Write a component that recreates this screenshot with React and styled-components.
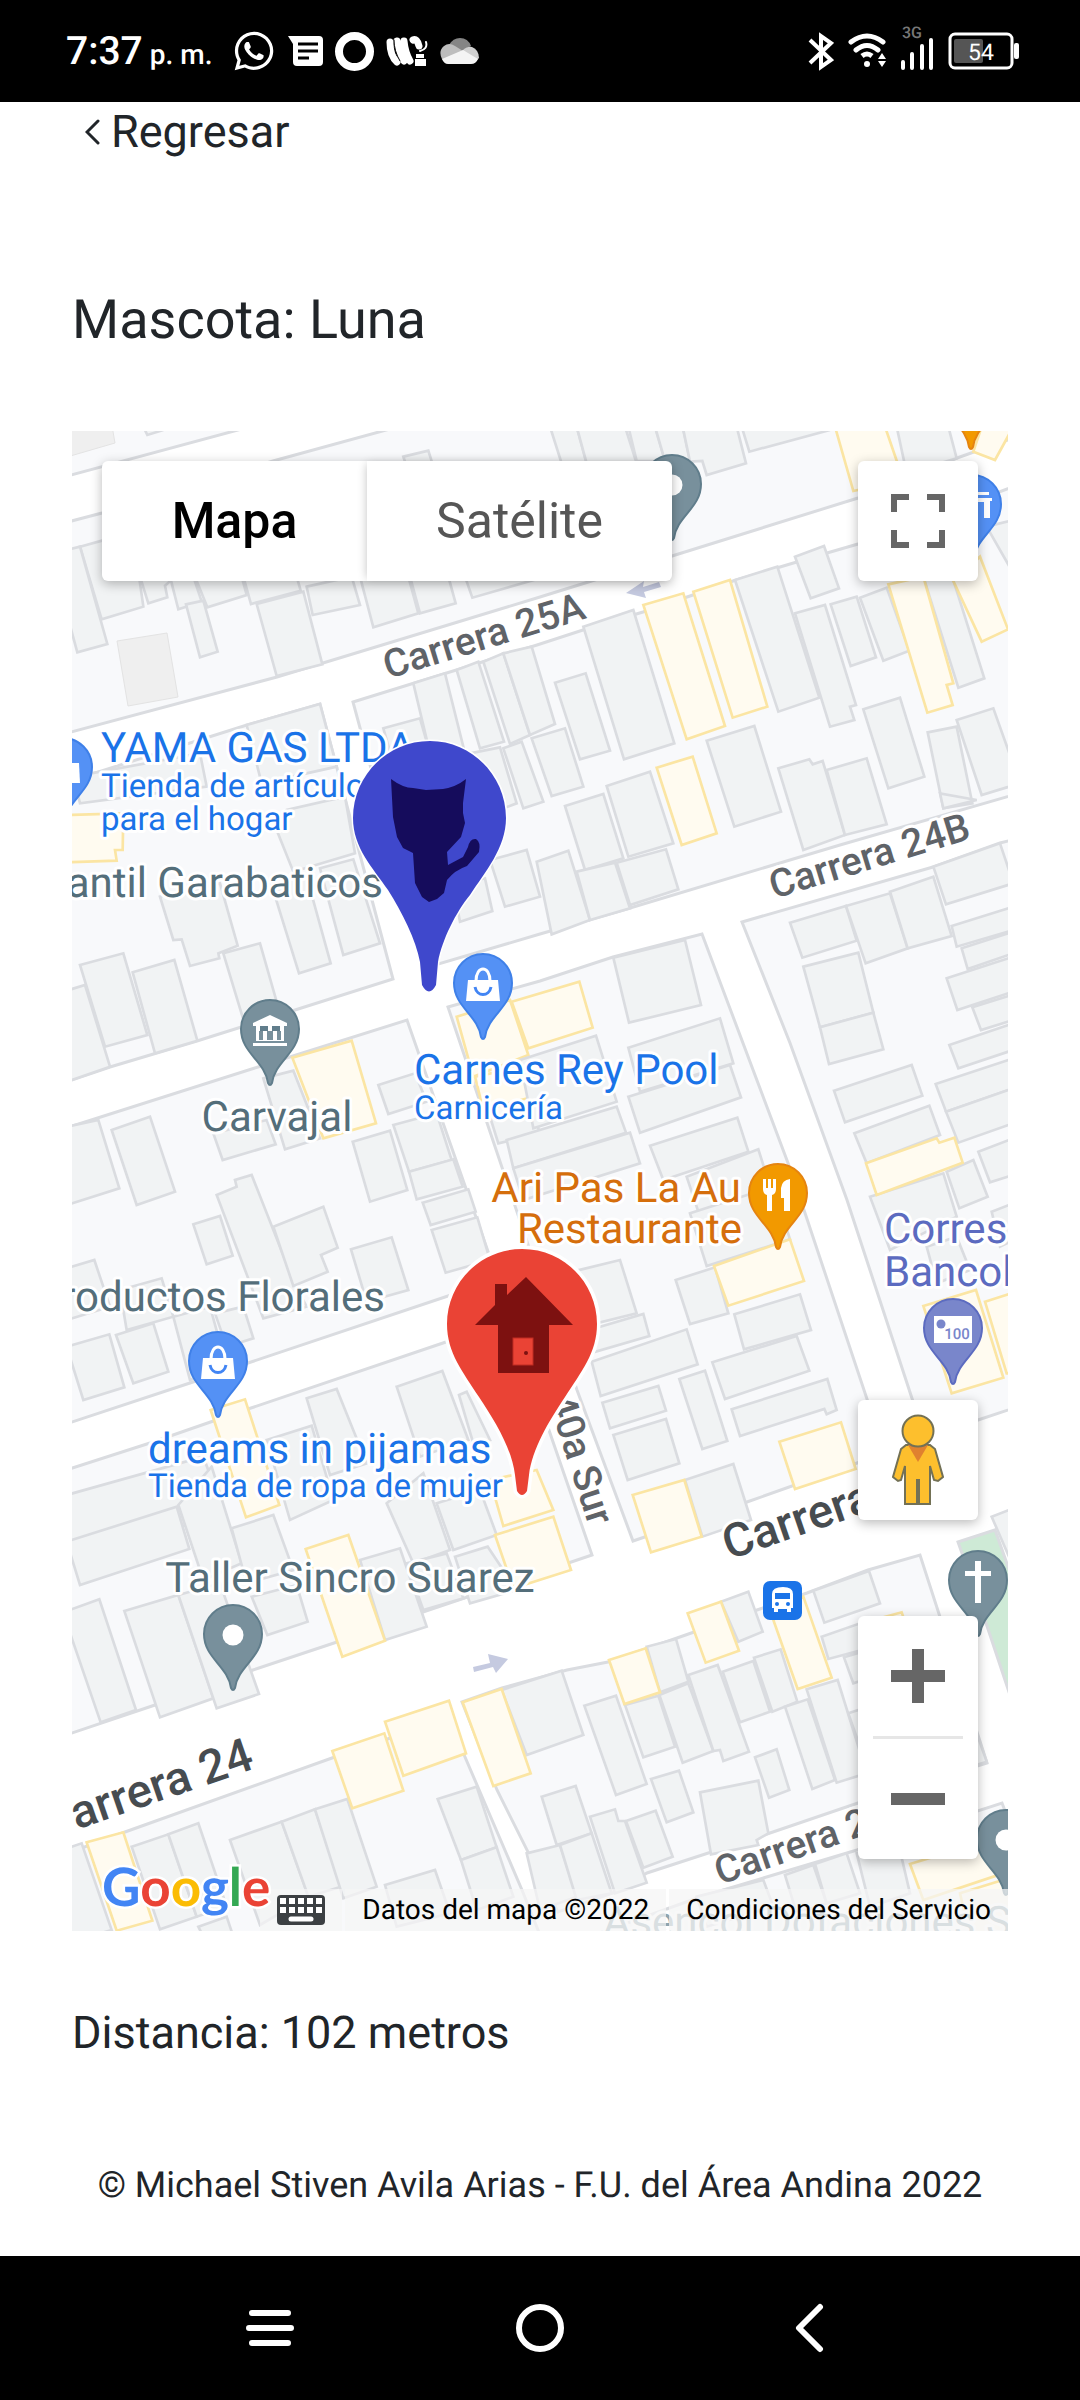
import React from "react";
import styled, { createGlobalStyle } from "styled-components";
import { FaWhatsapp } from "react-icons/fa";

const GlobalStyle = createGlobalStyle`
  * { box-sizing: border-box; }
  body {
    margin: 0;
    background: #fff;
    color: #212529;
    font-family: Roboto, "Liberation Sans", sans-serif;
    text-rendering: geometricPrecision;
  }
  button { border: 0; margin: 0; padding: 0; font: inherit; background: none; }
  svg { display: block; flex: none; }
`;

const Page = styled.div`
  display: flex;
  flex-direction: column;
  min-height: 100vh;
`;

const StatusBar = styled.header`
  display: flex;
  align-items: center;
  justify-content: space-between;
  height: 102px;
  padding: 0 60px 0 66px;
  background: #000;
  color: #fff;
`;

const StatusGroup = styled.div`
  display: flex;
  align-items: center;
  gap: ${(p) => p.$gap}px;
`;

const Clock = styled.time`
  font-size: 39px;
  font-weight: 500;
  line-height: 48px;
  padding-top: 4px;
  margin-right: 8px;
  small { font-size: 28px; margin-left: 7px; }
`;

const Main = styled.main`
  flex: 1;
  padding: 0 72px;
`;

const BackLink = styled.a`
  display: flex;
  align-items: center;
  gap: 11px;
  width: max-content;
  padding: 2px 0 0 13px;
  color: #212529;
  font-size: 45px;
  line-height: 56px;
  text-decoration: none;
`;

const Title = styled.h1`
  margin: 127px 0 76px;
  font-size: 54px;
  font-weight: 400;
  line-height: 68px;
`;

const MapFrame = styled.section`
  position: relative;
  height: 1500px;
  overflow: hidden;
  background: #fff;
`;

const MapDrawing = styled.svg`
  width: 100%;
  height: 100%;
`;

const Control = styled.div`
  position: absolute;
  display: flex;
  flex-direction: ${(p) => p.$direction || "row"};
  align-items: center;
  ${(p) => p.$place}
  border-radius: 6px;
  background: #fff;
  box-shadow: 0 3px 12px rgba(0, 0, 0, 0.28);
`;

const TypeButton = styled.button`
  height: 120px;
  width: ${(p) => p.$width}px;
  font-size: 50px;
  font-weight: ${(p) => (p.$active ? 500 : 400)};
  color: ${(p) => (p.$active ? "#000" : "#565656")};
  box-shadow: ${(p) => (p.$active ? "none" : "-3px 0 9px -3px rgba(0,0,0,.24)")};
`;

const IconButton = styled.button`
  display: grid;
  place-items: center;
  width: 120px;
  height: 120px;
`;

const Divider = styled.hr`
  width: 90px;
  height: 3px;
  margin: 0;
  border: 0;
  background: #e6e6e6;
`;

const Wordmark = styled.a`
  position: absolute;
  left: 30px;
  bottom: 10px;
  font-family: Lato, sans-serif;
  font-size: 53px;
  line-height: 68px;
  font-weight: 700;
  text-decoration: none;
  -webkit-text-stroke: 5px #fff;
  paint-order: stroke fill;
`;

const Letter = styled.span`
  color: ${(p) => p.$color};
`;

const Attribution = styled.footer`
  position: absolute;
  right: 0;
  bottom: 0;
  display: flex;
  gap: 3px;
  height: 42px;
`;

const Credit = styled.span`
  display: flex;
  align-items: center;
  padding: 0 17px;
  background: rgba(245, 245, 245, 0.72);
  color: #000;
  font-size: 28px;
  line-height: 42px;
  white-space: nowrap;
  a, button { color: inherit; text-decoration: none; }
`;

const Distance = styled.p`
  margin: 68px 0 0;
  font-size: 45px;
  line-height: 68px;
`;

const Footer = styled.footer`
  padding: 92px 0 44px;
  font-size: 36px;
  line-height: 52px;
  text-align: center;
`;

const NavBar = styled.nav`
  display: grid;
  grid-template-columns: repeat(3, 1fr);
  height: 144px;
  padding: 0 12.5%;
  background: #000;
`;

const NavButton = styled.button`
  display: grid;
  place-items: center;
`;

/* City blocks, in map pixels */
const BLOCKS = [
  "60,420 275,420 60,478",
  "60,524 102,513 273,461 430,418 1020,418 1008,440 957,458 858,498 672,556 540,597 277,677 60,735",
  "60,784 247,725 320,704 372,900 393,979 295,1010 197,1041 110,1067 60,1084",
  "353,702 537,645 583,630 643,612 690,596 733,581 780,567 827,553 858,544 978,500 1020,484 1020,793 840,845 630,908 540,934 425,968",
  "60,1130 258,1067 407,1020 498,1280 448,1296 248,1363 193,1382 60,1426",
  "448,1007 540,981 613,957 702,934 788,1163 805,1213 885,1453 857,1463 747,1502 633,1541 577,1390",
  "742,922 933,867 1000,843 1020,838 1020,1406 978,1420 925,1438 847,1200 790,1043",
  "60,1472 150,1443 248,1409 443,1343 511,1320 592,1555 423,1612 337,1642 253,1670 155,1705 60,1737",
  "60,1856 125,1832 332,1758 385,1740 448,1716 465,1757 522,1890 542,1940 60,1940",
  "462,1702 502,1688 567,1670 608,1662 677,1638 757,1610 807,1593 868,1570 920,1555 940,1617 987,1763 858,1803 770,1833 647,1873 613,1893 558,1912 497,1790",
  "580,1940 700,1897 857,1850 1002,1803 1020,1850 1020,1940",
];

/* Building footprints by tile; tiles are drawn at three units to the pixel */
const TILES = [
  {
    x: 60, y: 420,
    homes: [
      "250,20 262,45 310,30", "60,380 126,362 220,350 250,560 125,598", "20,390 60,380 142,672 52,697 20,580",
      "240,470 265,550 322,532 315,497 345,470", "330,470 355,568 425,545 400,470", "378,553 430,542 473,695 420,712",
      "405,470 442,562 560,525 545,470", "550,470 573,552 722,512 710,470", "590,552 730,515 787,733 650,768",
      "740,500 875,470 900,555 758,585", "900,470 940,622 1075,580 1045,470", "1050,470 1080,580 1187,550 1165,470",
      "1215,470 1237,533 1440,475 1440,440", "1030,110 1105,92 1120,140 1040,140", "560,915 780,852 830,1040 605,1090",
      "970,925 1080,895 1110,1000 1000,1030", "1060,790 1155,760 1215,1000 1110,1000",
      "1190,750 1255,725 1332,965 1260,985", "1270,725 1330,700 1410,945 1350,972", "1330,700 1415,680 1485,912 1410,945",
      "1330,985 1385,965 1450,1145 1390,1165", "1230,1000 1320,982 1370,1150 1290,1180", "40,1070 420,1000 440,1100 60,1150",
    ],
    shops: [],
  },
  {
    x: 540, y: 420,
    homes: [
      "30,20 110,20 140,130 65,130", "110,20 255,20 290,130 140,130", "265,20 345,20 375,123 290,123",
      "345,20 428,20 450,123 375,123", "428,20 590,20 618,130 500,165 487,123 450,125", "605,20 870,30 628,95",
      "1070,20 1225,20 1250,115 1100,160", "130,620 280,570 403,970 252,1018", "585,480 712,440 838,833 715,875",
      "765,410 852,378 897,505 812,535", "765,580 855,555 948,855 930,860 943,900 870,920", "872,553 950,530 1008,712 932,738",
      "960,533 1040,503 1108,692 1030,722", "1150,470 1240,480 1333,775 1255,803", "970,868 1080,833 1153,1070 1045,1105",
      "1163,937 1250,920 1297,1150 1210,1165", "1250,900 1360,865 1440,1090 1325,1125", "45,788 137,760 210,992 120,1018",
      "-25,955 75,925 130,1100 35,1128", "200,1098 330,1055 400,1270 265,1310",
      "75,1158 190,1122 250,1315 135,1350", "500,962 643,918 723,1175 583,1220",
      "715,1045 808,1018 818,1033 848,1023 915,1245 790,1290", "860,1050 980,1015 1040,1213 915,1245",
      "1340,320 1420,300 1420,460",
    ],
    shops: [
      "885,20 1035,20 1090,180 940,213", "1420,20 1365,120 1300,95 1325,20", "310,555 430,520 555,918 440,958",
      "460,515 570,480 682,860 578,893", "1045,493 1150,470 1240,790 1220,795 1238,855 1162,878 1108,700",
      "1240,483 1320,410 1404,628 1325,665", "350,1043 458,1010 530,1240 425,1275",
    ],
  },
  {
    x: 60, y: 800,
    homes: [
      "650,90 680,30 855,-10 885,160 700,215", "780,205 880,178 960,430 850,465", "300,290 480,250 533,437 475,460 478,475 390,498 365,418 340,420",
      "60,495 190,460 262,705 135,740", "20,572 75,555 150,800 20,845", "218,517 343,480 412,722 285,760",
      "490,460 600,430 660,640 555,675", "630,240 740,230 812,490 717,520", "155,990 270,950 345,1175 230,1215",
      "20,980 115,960 178,1165 20,1215", "610,835 700,812 780,1015 675,1048", "460,1000 620,960 647,1033 488,1080",
      "955,855 1065,820 1100,905 985,942", "1000,975 1130,940 1175,1080 1047,1115", "1047,1115 1180,1078 1208,1160 1070,1198",
      "878,1025 990,992 1042,1170 930,1205", "1290,950 1420,940 1440,1000 1315,1030", "1290,180 1400,150 1440,290 1335,320",
      "1180,260 1275,235 1297,333 1200,365", "1385,1103 1470,1080 1500,1160 1410,1180",
    ],
    shops: ["20,45 190,40 188,150 165,150 170,182 20,187", "1190,650 1350,600 1405,765 1240,830", "697,773 875,722 948,970 790,1015", "1245,830 1390,800 1420,890 1270,930"],
  },
  {
    x: 540, y: 800,
    homes: [
      "-10,185 85,152 150,360 35,403", "110,215 225,188 270,325 150,360", "230,188 378,148 415,268 270,315", "1200,-20 1210,25 1310,0",
      "220,473 435,420 483,615 267,668", "265,743 540,655 580,790 300,875", "265,890 570,795 603,892 300,998",
      "330,1037 592,953 625,1055 370,1140", "440,1130 655,1048 700,1190 480,1250", "-60,780 168,707 230,905 -20,985",
      "-100,1020 230,920 258,998 -80,1105", "-80,1105 270,998 300,1090 -50,1200", "750,368 918,318 950,422 787,473",
      "918,318 1050,280 1103,445 977,490", "1050,275 1180,230 1235,408 1103,445", "1180,200 1380,130 1420,250 1218,313",
      "1235,378 1420,320 1420,390 1250,440", "1265,445 1420,395 1420,460 1283,507", "1220,535 1420,470 1420,575 1252,630",
      "1297,622 1420,583 1420,660 1323,690", "1228,735 1420,670 1420,750 1255,805", "1187,852 1420,775 1420,865 1218,935",
      "1218,935 1420,865 1420,970 1255,1028", "790,500 955,458 1000,638 840,682", "840,682 1000,638 1030,748 867,792",
      "882,872 1115,795 1147,887 915,967", "943,1000 1168,917 1200,1005 980,1090", "1315,1055 1420,1015 1420,1125 1350,1147",
      "1220,1115 1300,1080 1343,1190 1258,1225", "990,1190 1210,1120 1250,1250 1050,1350",
    ],
    shops: ["-85,605 118,545 158,683 -35,745", "978,1090 1190,1015 1198,1028 1243,1013 1268,1088 1010,1185"],
  },
  {
    x: 60, y: 1180,
    homes: [
      "470,45 530,20 525,0 575,-15 705,315 740,380 610,415", "400,133 480,108 518,227 440,253", "640,140 790,80 833,203 783,225 803,275 700,318",
      "873,208 995,172 1045,330 920,365", "1115,150 1252,112 1290,240 1157,278", "1088,68 1225,28 1247,95 1112,135",
      "20,265 103,240 150,380 20,420", "180,330 305,295 340,410 200,450", "20,500 148,463 193,622 70,660 20,500", "168,465 280,430 325,575 220,610",
      "340,410 450,380 500,560 390,600", "465,400 550,380 580,475 500,500", "1010,620 1147,573 1225,780 1080,830",
      "1197,645 1220,635 1290,780 1240,790", "740,655 830,627 920,850 810,885", "620,780 755,737 820,960 690,1020",
      "20,945 430,830 500,1020 20,1085", "20,1085 350,980 388,1107 60,1215", "355,975 455,860 545,1150 430,1200",
      "515,1045 640,1005 700,1170 560,1210", "900,1140 1020,1105 1100,1340 975,1380", "980,970 1090,880 1170,1110 1060,1150",
      "1130,970 1260,930 1310,1065 1180,1110", "1185,1130 1283,1100 1370,1230 1230,1270", "1040,1150 1160,1120 1210,1255 1090,1290",
    ],
    shops: [
      "452,690 555,658 658,975 558,1012", "737,1107 865,1065 975,1382 847,1430", "1290,900 1430,870 1480,990 1330,1038", "1305,1065 1480,1010 1533,1170 1360,1225",
    ],
  },
  {
    x: 540, y: 1180,
    homes: [
      "110,272 240,240 290,400 130,440", "130,455 310,402 328,468 150,520", "155,545 440,448 473,553 182,648", "187,668 355,618 378,692 210,745",
      "220,765 378,717 418,850 263,900", "418,597 495,572 562,783 487,807", "407,300 525,262 565,400 450,432", "583,403 780,343 813,450 612,508",
      "517,547 770,468 808,572 555,657", "575,688 862,597 890,690 860,703 853,687 600,768", "435,900 580,852 633,1020 487,1070",
      "450,100 700,20 750,178 500,258", "1355,95 1420,70 1420,180 1380,200", "1160,200 1250,170 1290,270 1190,310", "1355,1010 1420,985 1420,1160",
    ],
    shops: [
      "522,258 750,178 792,303 565,377", "718,785 903,727 947,867 765,927", "278,945 433,900 485,1070 333,1117",
      "1150,378 1308,330 1390,593 1235,640", "1335,365 1420,338 1420,580 1400,580",
    ],
  },
  {
    x: 60, y: 1560,
    homes: [
      "20,153 118,118 228,450 122,487 20,190", "193,153 355,105 460,415 300,472", "355,105 480,70 597,402 470,445", "575,110 710,75 743,185 622,225",
      "1325,390 1505,332 1570,525 1400,585", "510,840 665,785 745,1010 600,1095", "665,785 765,748 843,980 745,1010", "765,748 862,717 950,980 850,1015",
      "1133,717 1250,680 1310,862 1203,900", "1203,900 1310,862 1360,1010 1250,1050", "975,975 1125,930 1170,1060 1010,1100",
      "215,860 325,823 410,1070 300,1108", "325,823 415,790 500,1040 410,1070", "20,865 65,850 155,1110 20,1150", "415,1100 500,1070 520,1130 430,1130",
      "1405,885 1470,865 1500,1000 1450,1010",
    ],
    shops: ["817,573 973,520 1030,692 877,745", "975,485 1167,422 1218,580 1030,647", "1208,427 1325,387 1412,640 1300,678", "80,847 190,817 277,1082 170,1112"],
  },
  {
    x: 540, y: 1560,
    homes: [
      "820,92 987,33 1020,130 853,188", "543,125 625,95 668,215 595,245", "320,260 408,237 445,365 360,397", "133,437 228,407 320,672 228,705",
      "255,435 355,407 405,560 310,592", "358,405 445,370 520,573 428,608", "445,345 533,315 627,575 550,603 540,570 520,573", "548,335 640,303 690,455 600,487",
      "642,293 722,268 772,425 697,455", "845,230 960,190 985,265 865,297", "912,292 985,270 1000,350 940,370", "735,440 803,418 885,660 817,687",
      "800,388 893,360 980,640 890,668", "645,592 710,568 748,690 687,713", "333,657 417,632 460,757 380,787", "480,697 655,662 685,820 650,840 655,855 513,883",
      "5,710 107,678 155,820 50,855", "150,770 225,748 235,783 255,783 320,968 225,1000", "258,783 347,752 398,890 310,923", "-40,880 60,855 110,1010 0,1050",
      "60,855 155,820 215,1000 110,1020", "925,460 985,440 1010,560 960,560", "470,1010 670,960 700,1040 500,1100", "735,945 820,915 860,1030 770,1060", "825,912 920,880 960,1000 860,1030",
      "950,880 1075,850 1110,1000 990,1040", "1200,500 1310,520 1340,605 1230,640",
    ],
    shops: [
      "700,180 790,110 875,353 773,387", "443,160 543,125 597,272 497,308", "207,300 317,265 360,397 253,432", "1110,912 1380,830 1420,930 1150,1020", "1260,1000 1420,950 1420,1130 1290,1130", "1000,180 1085,157 1100,200",
    ],
  },
];

const BLUE = { fill: "#5491f5", edge: "#3f80e8" };
const GREY = { fill: "#78909c", edge: "#607d8b" };
const ORANGE = { fill: "#f29900", edge: "#e58410" };
const VIOLET = { fill: "#7986cb", edge: "#5c6bc0" };

const glyphs = {
  dot: <circle r="10.5" cy="1" fill="#fff" />,
  bag: (
    <g>
      <path d="M-15-3H15L17 18H-17Z" fill="#fff" />
      <path d="M-7-2C-7-18 7-18 7-2" fill="none" stroke="#fff" strokeWidth="3" />
      <path d="M-8 4C-6 14 6 14 8 4" fill="none" stroke="#4285f4" strokeWidth="3" />
    </g>
  ),
  museum: (
    <g fill="#fff">
      <path d="M0-14 17-6V-3H-17V-6Z" />
      <path d="M-14-3H14V12H-14ZM-11 2V11H-7V2ZM-3 2V11H3V2ZM7 2V11H11V2Z" fillRule="evenodd" />
      <path d="M-10-3H-2V2H-10ZM2-3H10V2H2Z" fill="#607d8b" />
      <path d="M-17 14H17V17H-17Z" />
    </g>
  ),
  fork: (
    <g fill="#fff">
      <path d="M-15-14H-12V-5H-10V-14H-7V-5H-5V-14H-2V-4Q-2 1-6 2V18H-11V2Q-15 1-15-4Z" />
      <path d="M12-14V18H6V5H3V-5Q4-13 12-14Z" />
    </g>
  ),
  cross: <path d="M-3-19H3V-9H13V-4H3V23H-3V-4H-13V-9H-3Z" fill="#fff" />,
  store: <path d="M5-12H17V-9H5ZM3-6H20V-3H18V14H12V-2H3Z" fill="#fff" />,
  note: (
    <g>
      <path d="M-19-12H19V15H-19Z" fill="#fff" />
      <circle cx="-12" cy="-4" r="4.5" fill="#7986cb" />
      <text x="4" y="11" textAnchor="middle" fontSize="15" fontWeight="500" fill="#7986cb">100</text>
    </g>
  ),
  shopEdge: <path d="M0-4H16L17 16H0Z" fill="#fff" />,
};

const PINS = [
  [672, 484, GREY, "dot"], [972, 504, BLUE, "store"], [971, 393, ORANGE, "dot"], [63, 767, BLUE, "shopEdge"],
  [270, 1029, GREY, "museum"], [483, 983, BLUE, "bag"], [778, 1193, ORANGE, "fork"], [218, 1361, BLUE, "bag"],
  [233, 1634, GREY, "dot"], [978, 1580, GREY, "cross"], [1006, 1839, GREY, "dot"], [953, 1328, VIOLET, "note"],
];

const LABELS = [
  ["YAMA GAS LTDA", 101, 762, 42, "#1a73e8"],
  ["Tienda de artículo", 101, 797, 33, "#1a73e8"],
  ["para el hogar", 101, 830, 33, "#1a73e8"],
  ["antil Garabaticos", 383, 897, 42, "#546e7a", "end"],
  ["Carvajal", 277, 1131, 42, "#546e7a", "middle"],
  ["Carnes Rey Pool", 414, 1084, 42, "#1a73e8"],
  ["Carnicería", 414, 1119, 33, "#1a73e8"],
  ["Ari Pas La Au", 741, 1202, 42, "#d56e0c", "end"],
  ["Restaurante", 742, 1243, 42, "#d56e0c", "end"],
  ["Corres", 884, 1243, 42, "#5c6bc0"],
  ["Bancol", 884, 1286, 42, "#5c6bc0"],
  ["roductos Florales", 385, 1311, 42, "#546e7a", "end"],
  ["dreams in pijamas", 148, 1463, 42, "#1a73e8"],
  ["Tienda de ropa de mujer", 148, 1497, 33, "#1a73e8"],
  ["Taller Sincro Suarez", 350, 1592, 42, "#546e7a", "middle"],
  ["Asencol Dotaciones S", 603, 1936, 42, "#90a4ae"],
];

const STREETS = [
  ["Carrera 25A", 388, 679, 39, -17, "start", "#5f6368"],
  ["Carrera 24B", 774, 899, 39, -17, "start", "#5f6368"],
  ["Carrera", 729, 1560, 47, -19, "start", "#474c50"],
  ["arrera 24", 256, 1768, 47, -19, "end", "#474c50"],
  ["Carrera 23", 720, 1885, 39, -19, "start", "#5f6368"],
  ["40a Sur", 589, 1527, 39, 72, "end", "#5f6368"],
];

function Pin({ x, y, tone, glyph }) {
  return (
    <g transform={`translate(${x} ${y})`}>
      <path
        d="M0-29A29 29 0 0 0-29 0C-29 24-5 32-2 54Q0 58 2 54C5 32 29 24 29 0A29 29 0 0 0 0-29Z"
        fill={tone.fill}
        stroke={tone.edge}
        strokeWidth="2"
      />
      {glyphs[glyph]}
    </g>
  );
}

function StreetMap() {
  return (
    <MapDrawing viewBox="72 431 936 1500" preserveAspectRatio="xMidYMid slice" fontFamily="Roboto, sans-serif" role="img" aria-label="Mapa con la ubicación de Luna">
      <rect x="72" y="431" width="936" height="1500" fill="#fff" />
      <g fill="#f8f9fb" stroke="#dadce0" strokeWidth="3">
        {BLOCKS.map((b) => <polygon key={b} points={b} />)}
        <polygon points="958,1542 995,1530 1020,1600 1020,1725 975,1590" fill="#ceead6" />
      </g>
      {TILES.map((t) => (
        <g key={`${t.x}-${t.y}`} transform={`translate(${t.x} ${t.y}) scale(${1 / 3})`} strokeWidth="8">
          <g fill="#f1f3f4" stroke="#dadce0">{t.homes.map((p) => <polygon key={p} points={p} />)}</g>
          <g fill="#fffbf0" stroke="#fbe5a3">{t.shops.map((p) => <polygon key={p} points={p} />)}</g>
        </g>
      ))}
      <g fill="#efefef" stroke="#e3e3e3">
        <polygon points="60,420 111,420 115,443 60,459" />
        <polygon points="117,641 167,633 178,697 128,706" />
      </g>
      <g fill="#c5cae0">
        <polygon points="626,593 644,581 643,587 659,582 661,587 644,592 646,598" />
        <polygon points="473,1667 490,1663 488,1654 508,1659 496,1673 493,1667 474,1672" />
      </g>
      <g fontWeight="500" stroke="#fff" strokeWidth="6" strokeLinejoin="round" paintOrder="stroke">
        {STREETS.map(([text, x, y, size, angle, anchor, color]) => (
          <text key={text} fontSize={size} fill={color} textAnchor={anchor} transform={`translate(${x} ${y}) rotate(${angle})`}>{text}</text>
        ))}
      </g>
      {PINS.map(([x, y, tone, glyph]) => <Pin key={`${x}-${y}`} x={x} y={y} tone={tone} glyph={glyph} />)}
      <g transform="translate(763 1580)">
        <rect width="39" height="39" rx="7" y="1" fill="#1a73e8" />
        <path d="M9 14Q9 7 20 7Q30 7 30 14V28H28V32H24V29H15V32H11V28H9Z" fill="#fff" />
        <path d="M12 13H27V19H12Z" fill="#1a73e8" />
        <circle cx="14" cy="24" r="2" fill="#1a73e8" />
        <circle cx="25" cy="24" r="2" fill="#1a73e8" />
      </g>
      <g stroke="#fff" strokeWidth="6" strokeLinejoin="round" paintOrder="stroke">
        {LABELS.map(([text, x, y, size, color, anchor]) => (
          <text key={text} x={x} y={y} fontSize={size} fill={color} textAnchor={anchor}>{text}</text>
        ))}
      </g>
      <path
        d="M430 741C387 741 353 776 353 818C353 848 373 868 388 890C402 912 416 940 420 962L422 985Q429 998 436 985L438 962C442 940 456 912 470 895C485 872 506 848 506 818C506 776 472 741 430 741Z"
        fill="#3f48cc" stroke="#fff" strokeWidth="3" paintOrder="stroke"
      />
      <path
        d="M391 779Q403 788 413 788L426 790L443 789Q456 787 466 779L463 803V813L465 823L461 837L447 852L448 865L463 857L468 847Q470 838 476 839Q481 842 479 852L467 866Q455 870 447 880L444 893L437 899L429 902L422 897L415 883L413 853L403 848L397 837L393 817Z"
        fill="#150c5c"
      />
      <path
        d="M522 1249C479 1249 447 1284 447 1324C447 1353 463 1372 479 1397C495 1421 512 1449 515 1475L517 1491Q522 1499 527 1491L529 1475C532 1449 549 1421 565 1397C581 1372 597 1353 597 1324C597 1284 565 1249 522 1249Z"
        fill="#ea4335" stroke="#fff" strokeWidth="7" paintOrder="stroke"
      />
      <path d="M475 1325 495 1305V1284H507V1295L526 1277 573 1325H549V1373H498V1325Z" fill="#7d1110" />
      <rect x="513" y="1338" width="20" height="27" fill="#ea4335" stroke="#c02c22" strokeWidth="1" />
      <circle cx="526" cy="1353" r="2" fill="#7d1110" />
    </MapDrawing>
  );
}

function Messages() {
  return (
    <svg width="35" height="30" viewBox="0 0 35 30" aria-hidden="true">
      <path d="M0 0H31Q35 0 35 4V26Q35 30 31 30H9Q5 30 5 26V8Z" fill="#fff" />
      <path d="M10 8H30M10 15H30M10 22H21" stroke="#000" strokeWidth="3" />
    </svg>
  );
}

function Swirl() {
  return (
    <svg width="42" height="31" viewBox="0 0 42 31" fill="none" stroke="#fff" strokeLinecap="round" aria-hidden="true">
      <path d="M4 6Q4 20 11 26" strokeWidth="7" />
      <path d="M11 5Q13 19 18 25M18 5Q19 16 24 25" strokeWidth="7" />
      <path d="M27 4Q31 2 33 10" strokeWidth="7" />
      <path d="M34 15Q42 13 40 6" strokeWidth="2" />
      <path d="M31 25V28H38V25Z M32 20H36" strokeWidth="4" strokeLinecap="square" />
      <path d="M8 4Q8 15 14 25M22 2Q23 10 28 18" stroke="#000" strokeWidth="1" />
    </svg>
  );
}

function Cloud() {
  return (
    <svg width="39" height="26" viewBox="0 0 39 26" aria-hidden="true">
      <path d="M9 7Q13 0 20 0Q28 0 31 8L22 13Z" fill="#858585" />
      <path d="M2 21Q-2 13 4 8Q9 4 15 8L23 13 3 22Z" fill="#bdbdbd" />
      <path d="M22 13Q27 8 32 9Q39 12 39 20L37 22Z" fill="#d0d0d0" />
      <path d="M2 21 23 12 38 21Q36 26 31 26H8Q4 26 2 21Z" fill="#f4f4f4" />
    </svg>
  );
}

export default function App() {
  return (
    <>
      <GlobalStyle />
      <Page>
        <StatusBar>
          <StatusGroup $gap={12}>
            <Clock>7:37<small>p. m.</small></Clock>
            <FaWhatsapp size={44} aria-hidden="true" />
            <Messages />
            <svg width="39" height="39" aria-hidden="true"><circle cx="19.5" cy="19.5" r="15.5" fill="none" stroke="#fff" strokeWidth="8" /></svg>
            <Swirl />
            <Cloud />
          </StatusGroup>
          <StatusGroup $gap={14}>
            <svg width="26" height="39" viewBox="0 0 26 39" fill="none" stroke="#fff" strokeWidth="4" aria-hidden="true">
              <path d="M2 8 23 28 13 35V4L23 11 2 31" />
            </svg>
            <svg width="38" height="36" viewBox="2 0 38 36" fill="none" stroke="#fff" strokeWidth="5" strokeLinecap="round" aria-hidden="true">
              <path d="M5 9Q21-3 37 9M10 17Q21 8 32 17" />
              <path d="M16 23Q21 19 26 23" strokeLinecap="butt" />
              <circle cx="21" cy="31" r="3" fill="#fff" stroke="none" />
              <path d="M32 26 36 20 40 26ZM32 28 36 34 40 28Z" fill="#fff" stroke="none" />
            </svg>
            <svg width="34" height="56" viewBox="0 0 34 56" fontFamily="Roboto, sans-serif" aria-hidden="true">
              <text x="2" y="15" fontSize="16" fontWeight="500" fill="#777">3G</text>
              <path d="M3 39V45M12 31V45M22 23V45M31 17V45" stroke="#fff" strokeWidth="4" strokeLinecap="round" />
            </svg>
            <svg width="72" height="38" viewBox="0 0 72 38" fontFamily="Roboto, sans-serif" aria-label="Batería 54">
              <rect x="2" y="2" width="62" height="34" rx="5" fill="none" stroke="#fff" strokeWidth="3" />
              <rect x="6" y="7" width="29" height="24" rx="2" fill="#555" />
              <rect x="66" y="11" width="5" height="16" rx="2" fill="#fff" />
              <text x="33" y="28" fontSize="23" textAnchor="middle" fill="#fff">54</text>
            </svg>
          </StatusGroup>
        </StatusBar>

        <Main>
          <BackLink href="#regresar">
            <svg width="15" height="26" viewBox="0 0 15 26" fill="none" stroke="#212529" strokeWidth="3" strokeLinecap="round" aria-hidden="true">
              <path d="M13 2 2 13 13 24" />
            </svg>
            Regresar
          </BackLink>
          <Title>Mascota: Luna</Title>

          <MapFrame>
            <StreetMap />
            <Control $place="left: 30px; top: 30px;">
              <TypeButton type="button" $width={265} $active>Mapa</TypeButton>
              <TypeButton type="button" $width={305}>Satélite</TypeButton>
            </Control>
            <Control $place="right: 30px; top: 30px;">
              <IconButton type="button" aria-label="Pantalla completa">
                <svg width="54" height="54" fill="none" stroke="#666" strokeWidth="6">
                  <path d="M3 18V3H18M36 3H51V18M51 36V51H36M18 51H3V36" />
                </svg>
              </IconButton>
            </Control>
            <Control $place="right: 30px; bottom: 411px;">
              <IconButton type="button" aria-label="Street View">
                <svg width="52" height="92" viewBox="0 0 52 92" stroke="#737155" strokeWidth="2">
                  <path d="M14 31H38L43 35 51 63 46 67 42 66 38 52V90H27V66H25V90H13V52L9 66 6 67 1 63 9 35Z" fill="#fdbf2d" />
                  <path d="M16 31H36L26 48Z" fill="#e0812f" stroke="none" />
                  <circle cx="26" cy="17" r="15.5" fill="#fdbf2d" />
                </svg>
              </IconButton>
            </Control>
            <Control $place="right: 30px; bottom: 72px;" $direction="column">
              <IconButton type="button" aria-label="Acercar">
                <svg width="54" height="54" stroke="#666" strokeWidth="12"><path d="M0 27H54M27 0V54" /></svg>
              </IconButton>
              <Divider />
              <IconButton type="button" aria-label="Alejar">
                <svg width="54" height="12" stroke="#666" strokeWidth="12"><path d="M0 6H54" /></svg>
              </IconButton>
            </Control>
            <Attribution>
              <Credit>
                <button type="button" aria-label="Combinaciones de teclas">
                  <svg width="48" height="30" viewBox="0 0 48 30">
                    <rect width="48" height="30" rx="4" fill="#3c4043" />
                    <path d="M3 6H45M3 15H45" stroke="#fff" strokeWidth="6" strokeDasharray="6 3" />
                    <path d="M14 24H34" stroke="#fff" strokeWidth="5" strokeLinecap="round" />
                  </svg>
                </button>
              </Credit>
              <Credit>Datos del mapa ©2022</Credit>
              <Credit><a href="#condiciones">Condiciones del Servicio</a></Credit>
            </Attribution>
            <Wordmark href="#google" aria-label="Google">
              <Letter $color="#4285f4">G</Letter>
              <Letter $color="#ea4335">o</Letter>
              <Letter $color="#fbbc04">o</Letter>
              <Letter $color="#4285f4">g</Letter>
              <Letter $color="#34a853">l</Letter>
              <Letter $color="#ea4335">e</Letter>
            </Wordmark>
          </MapFrame>

          <Distance>Distancia: 102 metros</Distance>
          <Footer>© Michael Stiven Avila Arias - F.U. del Área Andina 2022</Footer>
        </Main>

        <NavBar>
          <NavButton type="button" aria-label="Recientes">
            <svg width="48" height="36" stroke="#fff" strokeWidth="6" strokeLinecap="round"><path d="M6 3H42M3 18H45M6 33H42" /></svg>
          </NavButton>
          <NavButton type="button" aria-label="Inicio">
            <svg width="48" height="48"><circle cx="24" cy="24" r="21" fill="none" stroke="#fff" strokeWidth="6" /></svg>
          </NavButton>
          <NavButton type="button" aria-label="Atrás">
            <svg width="32" height="50" fill="none" stroke="#fff" strokeWidth="6" strokeLinecap="round" strokeLinejoin="round"><path d="M26 4 5 25 26 46" /></svg>
          </NavButton>
        </NavBar>
      </Page>
    </>
  );
}
